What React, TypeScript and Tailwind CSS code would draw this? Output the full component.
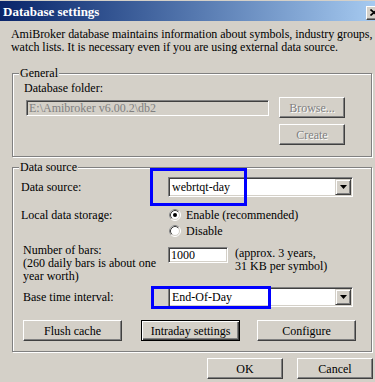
import React from "react";

const raised =
  "border border-t-white border-l-white border-r-[#404040] border-b-[#404040] shadow-[inset_-1px_-1px_0_#808080]";
const sunken =
  "border border-t-[#808080] border-l-[#808080] border-r-white border-b-white shadow-[inset_1px_1px_0_#404040,inset_-1px_-1px_0_#D4D0C8]";

function Btn({
  children,
  className = "",
  disabled = false,
  isDefault = false,
}: {
  children: React.ReactNode;
  className?: string;
  disabled?: boolean;
  isDefault?: boolean;
}) {
  const frame = isDefault
    ? "border border-black shadow-[inset_1px_1px_0_#fff,inset_-1px_-1px_0_#404040,inset_-2px_-2px_0_#808080]"
    : raised;
  return (
    <div
      className={`h-[21px] flex items-center justify-center whitespace-nowrap bg-[#D4D0C8] ${frame} ${className}`}
    >
      <span
        className={
          disabled ? "text-[#808080] [text-shadow:1px_1px_0_#fff]" : "text-black"
        }
      >
        {children}
      </span>
    </div>
  );
}

function GroupBox({
  label,
  className = "",
  children,
}: {
  label: string;
  className?: string;
  children: React.ReactNode;
}) {
  return (
    <div
      className={`relative ml-[12px] w-[360px] border border-[#808080] shadow-[inset_1px_1px_0_#fff,1px_1px_0_#fff] ${className}`}
    >
      <span className="absolute left-[6px] -top-[7px] px-[1px] bg-[#D4D0C8] leading-[12px] whitespace-nowrap">
        {label}
      </span>
      {children}
    </div>
  );
}

function Combo({ value, children }: { value: string; children?: React.ReactNode }) {
  return (
    <div className={`relative w-[185px] h-[20px] p-[1px] bg-white ${sunken}`}>
      {children}
      <div className="h-full flex items-center">
        <span className="flex-1 pl-[2px] whitespace-nowrap">{value}</span>
        <div
          className={`w-[16px] h-[16px] flex items-center justify-center bg-[#D4D0C8] border border-t-[#D4D0C8] border-l-[#D4D0C8] border-r-[#404040] border-b-[#404040] shadow-[inset_1px_1px_0_#fff,inset_-1px_-1px_0_#808080]`}
        >
          <svg width="7" height="4" viewBox="0 0 7 4">
            <path d="M0 0H7L3.5 4Z" fill="#000" />
          </svg>
        </div>
      </div>
    </div>
  );
}

function Radio({ checked }: { checked: boolean }) {
  return (
    <svg width="12" height="12" viewBox="0 0 12 12" className="shrink-0">
      <circle cx="6" cy="6" r="5" fill="#fff" />
      <circle cx="6" cy="6" r="5.5" fill="none" stroke="#fff" strokeWidth="1" />
      <path d="M2.11 9.89A5.5 5.5 0 0 1 9.89 2.11" fill="none" stroke="#808080" strokeWidth="1" />
      <circle cx="6" cy="6" r="4.5" fill="none" stroke="#D4D0C8" strokeWidth="1" />
      <path d="M2.82 9.18A4.5 4.5 0 0 1 9.18 2.82" fill="none" stroke="#404040" strokeWidth="1" />
      {checked && <circle cx="6" cy="6" r="2" fill="#000" />}
    </svg>
  );
}

export default function App() {
  return (
    <div className="w-[375px] h-[382px] overflow-hidden bg-[#D4D0C8] text-black text-[12px] leading-[12px] font-['Liberation_Serif',serif] flex flex-col pt-[1px]">
      {/* Title bar */}
      <div className="h-[20px] shrink-0 flex items-center bg-linear-to-r from-[#0A246A] to-[#A6CAF0] pl-[3px]">
        <span className="text-white font-bold text-[13px] leading-[13px] whitespace-nowrap">
          Database settings
        </span>
        <div
          className={`ml-auto -mr-[7px] mt-[3px] shrink-0 w-[16px] h-[14px] flex items-center justify-center bg-[#D4D0C8] ${raised}`}
        >
          <svg width="8" height="7" viewBox="0 0 8 7">
            <path d="M0.5 0.5L7.5 6.5M7.5 0.5L0.5 6.5" stroke="#000" strokeWidth="1.6" />
          </svg>
        </div>
      </div>

      {/* Description */}
      <p className="mt-[7px] ml-[11px] whitespace-nowrap leading-[13px] tracking-[-0.05px]">
        AmiBroker database maintains information about symbols, industry groups,
        <br />
        watch lists. It is necessary even if you are using external data source.
      </p>

      {/* General */}
      <GroupBox label="General" className="mt-[19px] h-[84px] shrink-0">
        <div className="pt-[8px] pl-[11px]">
          <div className="whitespace-nowrap">Database folder:</div>
          <div className="mt-[3px] flex items-start">
            <div
              className={`mt-[3px] ml-[2px] w-[243px] h-[16px] flex items-center pl-[2px] bg-[#D4D0C8] text-[#808080] whitespace-nowrap ${sunken}`}
            >
              E:\Amibroker v6.00.2\db2
            </div>
            <div className="ml-[10px] flex flex-col gap-[6px]">
              <Btn disabled className="w-[66px]">
                Browse...
              </Btn>
              <Btn disabled className="w-[66px]">
                Create
              </Btn>
            </div>
          </div>
        </div>
      </GroupBox>

      {/* Data source */}
      <GroupBox label="Data source" className="mt-[10px] h-[185px] shrink-0">
        <div className="pt-[9px] pl-[8px]">
          <div className="flex items-center h-[20px]">
            <div className="w-[147px] whitespace-nowrap">Data source:</div>
            <Combo value="webrtqt-day">
              <div className="absolute -left-[19px] -top-[10px] w-[97px] h-[38px] border-[3px] border-[#0000FF] pointer-events-none" />
            </Combo>
          </div>

          <div className="mt-[11px] flex">
            <div className="w-[147px] whitespace-nowrap pt-[1px]">Local data storage:</div>
            <div className="flex flex-col gap-[2px] pl-[1px]">
              <div className="h-[14px] flex items-center gap-[5px] whitespace-nowrap">
                <Radio checked />
                <span>Enable (recommended)</span>
              </div>
              <div className="h-[14px] flex items-center gap-[5px] whitespace-nowrap">
                <Radio checked={false} />
                <span>Disable</span>
              </div>
            </div>
          </div>

          <div className="mt-[6px] flex items-start">
            <div className="w-[147px] pl-[2px] whitespace-nowrap leading-[13px]">
              Number of bars:
              <br />
              (260 daily bars is about one
              <br />
              year worth)
            </div>
            <div
              className={`mt-[3px] w-[60px] h-[16px] flex items-center pl-[2px] bg-white ${sunken}`}
            >
              1000
            </div>
            <div className="mt-[3px] ml-[7px] whitespace-nowrap leading-[13px]">
              (approx. 3 years,
              <br />
              31 KB per symbol)
            </div>
          </div>

          <div className="mt-[4px] flex items-center h-[20px]">
            <div className="w-[147px] pl-[2px] whitespace-nowrap">Base time interval:</div>
            <Combo value="End-Of-Day">
              <div className="absolute -left-[18px] -top-[2px] w-[120px] h-[23px] border-[3px] border-[#0000FF] pointer-events-none" />
            </Combo>
          </div>

          <div className="mt-[13px] flex">
            <Btn className="ml-[2px] w-[99px]">Flush cache</Btn>
            <Btn isDefault className="ml-[19px] w-[99px]">
              Intraday settings
            </Btn>
            <Btn className="ml-[17px] w-[99px]">Configure</Btn>
          </div>
        </div>
      </GroupBox>

      {/* OK / Cancel */}
      <div className="mt-[6px] flex justify-end pr-[2px] gap-[14px]">
        <Btn className="w-[76px]">OK</Btn>
        <Btn className="w-[76px]">Cancel</Btn>
      </div>
    </div>
  );
}
